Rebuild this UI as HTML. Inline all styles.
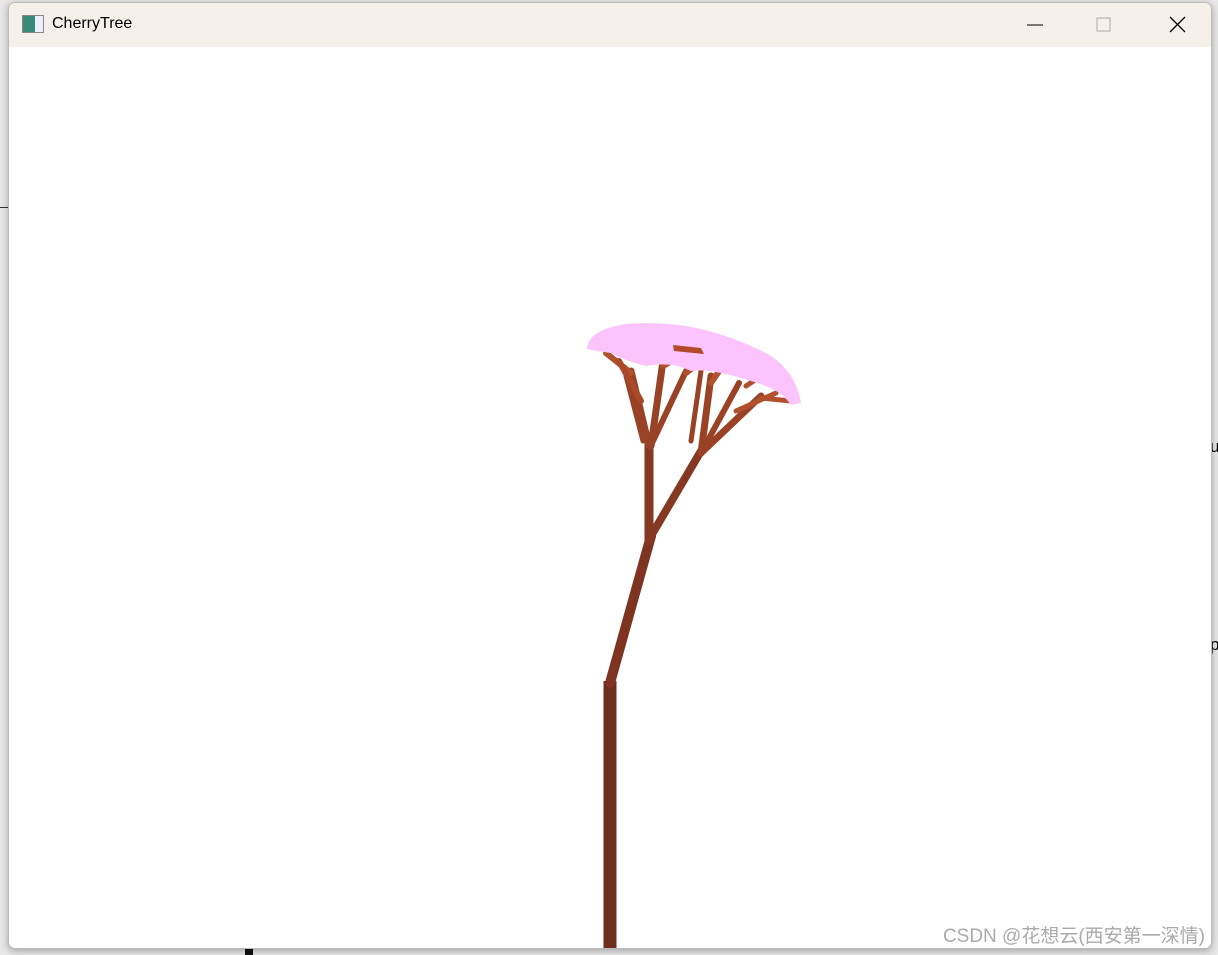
<!DOCTYPE html>
<html><head><meta charset="utf-8"><style>
body{margin:0;width:1218px;height:955px;background:#e8e8e8;position:relative;overflow:hidden;font-family:"Liberation Sans","Noto Sans CJK SC",sans-serif}
.win{position:absolute;left:8px;top:2px;width:1202px;height:945px;background:#fff;border:1px solid #bbb;border-radius:7px;overflow:hidden;box-shadow:0 2px 8px rgba(0,0,0,.3)}
.tb{height:44px;background:#f5f0ea;position:relative}
.tt{position:absolute;left:43px;top:12px;font-size:16px;color:#000}
.ic{position:absolute;left:13px;top:12px;width:20px;height:16px;border:1px solid #888;background:linear-gradient(90deg,#3a8a7a 60%,#eef 60%)}
.wm{position:absolute;right:6px;bottom:0px;font-size:19px;color:#aaa}
</style></head><body>
<div style="position:absolute;left:0;top:207px;width:8px;height:1px;background:#333"></div>
<div style="position:absolute;left:1210px;top:437px;font-size:17px">u</div>
<div style="position:absolute;left:1210px;top:635px;font-size:17px">p</div>
<div style="position:absolute;left:245px;top:947px;width:8px;height:8px;background:#111"></div>
<div class="win">
<div class="tb"><div class="ic"></div><div class="tt">CherryTree</div>
<svg style="position:absolute;left:1010px;top:10px" width="190" height="25"><line x1="8" y1="12" x2="24" y2="12" stroke="#000"/><rect x="78" y="5" width="13" height="13" fill="none" stroke="#aaa"/><path d="M151 4l15 15M166 4l-15 15" stroke="#000" stroke-width="1.3"/></svg></div>
<svg style="position:absolute;left:-8px;top:-2px" width="1218" height="955">
<g fill="none" stroke-linecap="round">
<line x1="609" y1="955" x2="609" y2="680" stroke="#6e2e1e" stroke-width="13" stroke-linecap="butt"/>
<line x1="609" y1="682" x2="650" y2="535" stroke="#7e3420" stroke-width="10"/>
<line x1="648" y1="540" x2="648" y2="440" stroke="#853822" stroke-width="9"/>
<line x1="650" y1="535" x2="700" y2="450" stroke="#853822" stroke-width="8"/>
<line x1="648" y1="445" x2="630" y2="370" stroke="#9a4226" stroke-width="7"/>
<line x1="650" y1="445" x2="662" y2="360" stroke="#9a4226" stroke-width="7"/>
<line x1="652" y1="440" x2="685" y2="370" stroke="#9a4226" stroke-width="6"/>
<line x1="642" y1="440" x2="625" y2="375" stroke="#9a4226" stroke-width="5"/>
<line x1="700" y1="452" x2="710" y2="375" stroke="#9a4226" stroke-width="7"/>
<line x1="700" y1="452" x2="760" y2="395" stroke="#9a4226" stroke-width="7"/>
<line x1="700" y1="452" x2="738" y2="382" stroke="#9a4226" stroke-width="6"/>
<line x1="690" y1="440" x2="700" y2="370" stroke="#9a4226" stroke-width="5"/>
<line x1="760" y1="397" x2="790" y2="400" stroke="#b0502c" stroke-width="5"/>
<line x1="735" y1="410" x2="775" y2="392" stroke="#b0502c" stroke-width="5"/>
<line x1="630" y1="372" x2="605" y2="352" stroke="#b0502c" stroke-width="6"/>
<line x1="640" y1="400" x2="618" y2="360" stroke="#a84a2a" stroke-width="6"/>
<line x1="710" y1="382" x2="725" y2="360" stroke="#b0502c" stroke-width="6"/>
<line x1="662" y1="365" x2="680" y2="355" stroke="#b0502c" stroke-width="6"/>
<line x1="685" y1="372" x2="700" y2="360" stroke="#b0502c" stroke-width="6"/>
<line x1="745" y1="385" x2="760" y2="375" stroke="#b0502c" stroke-width="5"/>
</g>
<path d="M586 346Q590 328 625 323Q665 320 700 328Q740 338 770 355Q795 372 800 402L790 404Q782 392 765 385Q740 376 720 372Q700 368 690 370Q670 360 645 365Q625 360 610 352Q595 350 586 348Z" fill="#fcc4fc"/>
<path d="M672 344l28 3 3 6-30-3z" fill="#b04a28"/>
</svg>
<div class="wm">CSDN @花想云(西安第一深情)</div>
</div>
</body></html>
